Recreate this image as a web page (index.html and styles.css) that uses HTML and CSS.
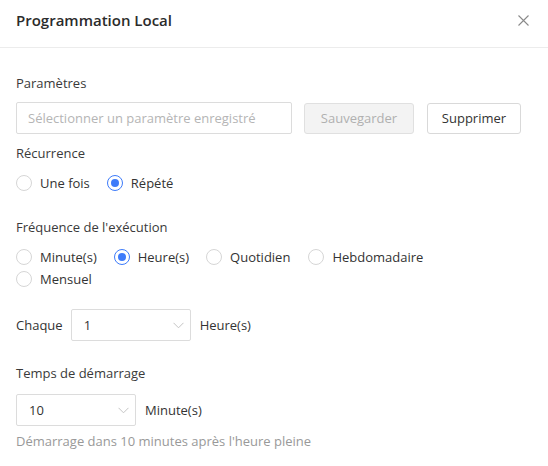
FILE: index.html
```html
<!DOCTYPE html>
<html lang="fr">
<head>
<meta charset="utf-8">
<title>Programmation Local</title>
<link rel="stylesheet" href="styles.css">
</head>
<body>
<div class="dialog">
  <div class="header">
    <span class="title">Programmation Local</span>
    <svg class="close" width="11" height="11" viewBox="0 0 11 11"><path d="M0.5 0.5L10.5 10.5M10.5 0.5L0.5 10.5" stroke="#8a8a8a" stroke-width="1.1" fill="none"/></svg>
  </div>
  <div class="content">
    <div class="label">Paramètres</div>
    <div class="row params">
      <div class="input"><span class="placeholder">Sélectionner un paramètre enregistré</span></div>
      <button class="btn disabled">Sauvegarder</button>
      <button class="btn">Supprimer</button>
    </div>

    <div class="label l-rec">Récurrence</div>
    <div class="radios r-rec">
      <label class="radio"><span class="circle"></span>Une fois</label>
      <label class="radio"><span class="circle on"></span>Répété</label>
    </div>

    <div class="label l-freq">Fréquence de l'exécution</div>
    <div class="radios r-freq">
      <label class="radio"><span class="circle"></span>Minute(s)</label>
      <label class="radio"><span class="circle on"></span>Heure(s)</label>
      <label class="radio"><span class="circle"></span>Quotidien</label>
      <label class="radio"><span class="circle"></span>Hebdomadaire</label>
      <label class="radio"><span class="circle"></span>Mensuel</label>
    </div>

    <div class="row every">
      <span class="text">Chaque</span>
      <div class="select"><span>1</span><svg class="chev" width="11" height="7" viewBox="0 0 11 7"><path d="M0.5 0.8L5.5 5.8L10.5 0.8" stroke="#c4c4c4" stroke-width="1" fill="none"/></svg></div>
      <span class="text">Heure(s)</span>
    </div>

    <div class="label l-start">Temps de démarrage</div>
    <div class="row start">
      <div class="select"><span>10</span><svg class="chev" width="11" height="7" viewBox="0 0 11 7"><path d="M0.5 0.8L5.5 5.8L10.5 0.8" stroke="#c4c4c4" stroke-width="1" fill="none"/></svg></div>
      <span class="text">Minute(s)</span>
    </div>
    <div class="hint">Démarrage dans 10 minutes après l'heure pleine</div>
  </div>
</div>
</body>
</html>
```

FILE: styles.css
```css
* { box-sizing: border-box; }
html, body { margin: 0; padding: 0; background: #fff; }
body {
  font-family: "Open Sans", "Noto Sans", sans-serif;
  font-size: 13px;
  color: #333;
  width: 548px;
  height: 466px;
  overflow: hidden;
}
.header {
  height: 48px;
  border-bottom: 1px solid #ececec;
  display: flex;
  align-items: flex-start;
  justify-content: space-between;
  padding: 9px 19px 0 16px;
}
.title {
  font-size: 15px;
  font-weight: 600;
  line-height: 22px;
  color: #2b2b2b;
}
.close { margin-top: 6px; }
.content { padding: 24px 16px 0 16px; }
.label { line-height: 22px; color: #3a3a3a; }
.row { display: flex; align-items: center; }
.params { margin-top: 8px; height: 32px; }
.input {
  width: 276px;
  height: 32px;
  border: 1px solid #dcdcdc;
  border-radius: 2px;
  padding: 0 11px;
  display: flex;
  align-items: center;
}
.placeholder { color: #b5b5b5; }
.btn {
  font-family: inherit;
  font-size: 13px;
  height: 31px;
  border: 1px solid #d9d9d9;
  border-radius: 3px;
  background: #fff;
  color: #333;
  padding: 0;
  margin-left: 12px;
}
.btn.disabled {
  width: 110px;
  background: #f3f3f3;
  color: #b0b0b0;
  border-color: #e0e0e0;
}
.btn + .btn { width: 94px; margin-left: 13px; }
.l-rec { margin-top: 8px; }
.radios { display: flex; flex-wrap: wrap; margin-top: 8px; }
.radio {
  display: flex;
  align-items: center;
  line-height: 22px;
  margin-right: 20px;
}
.circle {
  width: 16px;
  height: 16px;
  border: 1px solid #d6d6d6;
  border-radius: 50%;
  margin-right: 8px;
  position: relative;
  background: #fff;
}
.circle.on { border-color: #3d7bfa; }
.circle.on::after {
  content: "";
  position: absolute;
  left: 3px; top: 3px;
  width: 8px; height: 8px;
  border-radius: 50%;
  background: #3d7bfa;
}
.r-rec .radio:first-child { margin-right: 17px; }
.l-freq { margin-top: 22px; }
.r-freq { width: 470px; }
.r-freq .radio:nth-child(1) { margin-right: 17px; }
.r-freq .radio:nth-child(2) { margin-right: 17px; }
.r-freq .radio:nth-child(3) { margin-right: 18px; }
.every { margin-top: 19px; height: 32px; }
.select {
  width: 120px;
  height: 32px;
  border: 1px solid #dcdcdc;
  border-radius: 2px;
  display: flex;
  align-items: center;
  justify-content: space-between;
  padding: 0 6px 0 12px;
}
.chev { margin-top: 1px; }
.every .select { margin: 0 9px 0 8px; }
.l-start { margin-top: 21px; }
.start { margin-top: 10px; height: 32px; }
.start .select { margin-right: 9px; }
.hint { color: #999; line-height: 22px; margin-top: 4px; }
```
